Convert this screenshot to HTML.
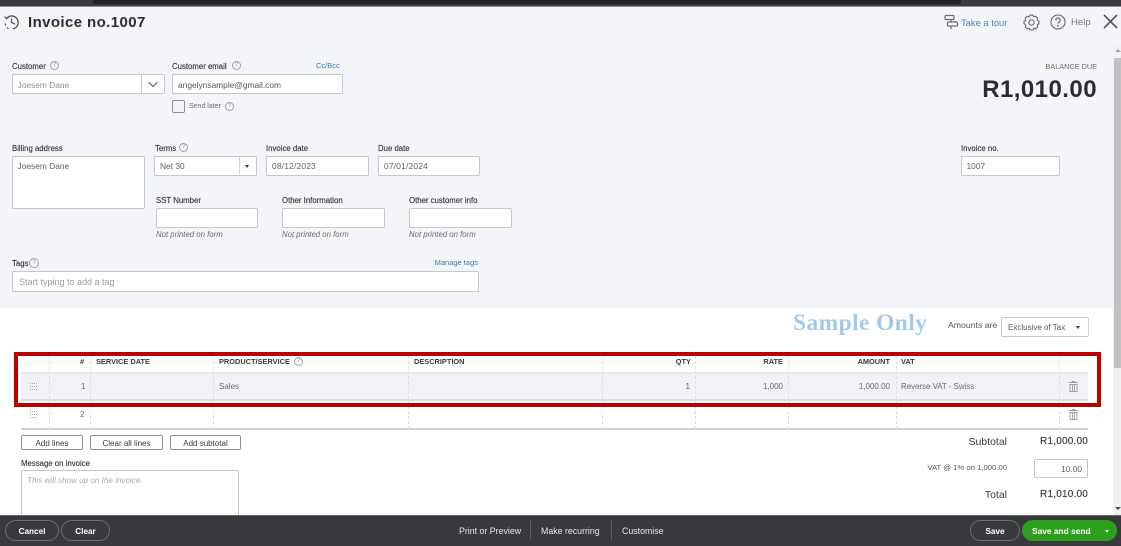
<!DOCTYPE html>
<html><head><meta charset="utf-8"><style>
html,body{margin:0;padding:0}
body{width:1121px;height:546px;position:relative;overflow:hidden;background:#f4f5f8;font-family:"Liberation Sans",sans-serif;color:#393a3d}
.a{position:absolute;white-space:nowrap}
.l{position:absolute;white-space:nowrap;font-size:7.8px;line-height:10px;color:#393a3d;margin-top:.6px;-webkit-text-stroke:.15px #393a3d}
.i{position:absolute;box-sizing:border-box;background:#fff;border:1px solid #c4c7cc;border-radius:2px;font-size:8.4px;color:#5f6066;padding-left:4.5px;white-space:nowrap}
.n{position:absolute;white-space:nowrap;font-size:7.8px;line-height:9px;font-style:italic;color:#6b6c72}
.q{position:absolute;box-sizing:border-box;width:9px;height:9px;border:1px solid #a0a3a8;border-radius:50%;font-size:6px;line-height:7px;text-align:center;color:#8d9096}
.h{position:absolute;top:357px;font-size:7.4px;line-height:10px;font-weight:700;color:#393a3d;white-space:nowrap}
.v{position:absolute;width:0;border-left:1px dashed #dcdee2}
.c{position:absolute;font-size:8px;line-height:10px;color:#6b6c72;white-space:nowrap}
.b{position:absolute;box-sizing:border-box;border:1px solid #8d9096;border-radius:2px;background:#fff;font-size:8px;color:#393a3d;text-align:center;height:15px;line-height:15px;top:435px}
.f{position:absolute;box-sizing:border-box;border:1px solid #6b6c72;border-radius:11px;height:21px;top:520px;line-height:22px;text-align:center;color:#fff;font-size:8.2px;font-weight:700}
.t{position:absolute;font-size:8.8px;line-height:10px;color:#e4e5e8;top:525.5px;white-space:nowrap}
</style></head><body>
<!-- top bar -->
<div class="a" style="left:0;top:0;width:1121px;height:6px;background:#3a3b3e"></div>
<div class="a" style="left:93px;top:0;width:868px;height:4px;background:#232427"></div>
<div class="a" style="left:0;top:6px;width:1121px;height:1px;background:#8f9094"></div>
<!-- history icon -->
<svg class="a" style="left:3px;top:13px" width="18" height="18" viewBox="0 0 18 18" fill="none" stroke="#55565b" stroke-width="1.3"><path d="M3.5 5.500A6.500 6.500 0 1 1 10 15.800"/><path d="M1.500 3.500l2 2.200 2.300-1.500"/><path d="M8.500 5.500v4l3.500 1.500"/><path d="M2.200 10.500l.6 2M4 14.500l1.500 1.200"/></svg>
<div class="a" style="left:28px;top:14px;font-size:15px;line-height:18px;font-weight:700;color:#2c2d30;letter-spacing:.4px">Invoice no.1007</div>
<!-- top right -->
<svg class="a" style="left:944px;top:14px" width="15" height="17" viewBox="0 0 15 17" fill="none" stroke="#6b6c72" stroke-width="1.2"><rect x="1" y="1.500" width="9" height="4" rx="1"/><rect x="3.500" y="8" width="10" height="4" rx="1"/><path d="M7 5.500V8M7 12v3"/></svg>
<div class="a" style="left:961px;top:17px;font-size:9.4px;line-height:11px;color:#4b86b8">Take a tour</div>
<svg class="a" style="left:1023px;top:14px" width="17" height="17" viewBox="0 0 24 24" fill="none" stroke="#6b6c72" stroke-width="1.6">
<circle cx="12" cy="12" r="3.800"/>
<path d="M9.200 3.600L10 1.500H14L14.800 3.600A8.850 8.850 0 0 1 15.960 4.090"/>
<path transform="rotate(45 12 12)" d="M9.200 3.600L10 1.500H14L14.800 3.600A8.850 8.850 0 0 1 15.960 4.090"/>
<path transform="rotate(90 12 12)" d="M9.200 3.600L10 1.500H14L14.800 3.600A8.850 8.850 0 0 1 15.960 4.090"/>
<path transform="rotate(135 12 12)" d="M9.200 3.600L10 1.500H14L14.800 3.600A8.850 8.850 0 0 1 15.960 4.090"/>
<path transform="rotate(180 12 12)" d="M9.200 3.600L10 1.500H14L14.800 3.600A8.850 8.850 0 0 1 15.960 4.090"/>
<path transform="rotate(225 12 12)" d="M9.200 3.600L10 1.500H14L14.800 3.600A8.850 8.850 0 0 1 15.960 4.090"/>
<path transform="rotate(270 12 12)" d="M9.200 3.600L10 1.500H14L14.800 3.600A8.850 8.850 0 0 1 15.960 4.090"/>
<path transform="rotate(315 12 12)" d="M9.200 3.600L10 1.500H14L14.800 3.600A8.850 8.850 0 0 1 15.960 4.090"/>
</svg>
<svg class="a" style="left:1050px;top:14px" width="16" height="16" viewBox="0 0 16 16" fill="none" stroke="#66676c" stroke-width="1.1"><circle cx="8" cy="8" r="7"/><path d="M5.800 6.200a2.200 2.200 0 1 1 3.400 1.800c-.8.500-1.200 1-1.200 1.800" stroke-width="1.2"/><circle cx="8" cy="11.800" r=".4" fill="#66676c"/></svg>
<div class="a" style="left:1071px;top:17px;font-size:9.6px;line-height:11px;color:#77787d">Help</div>
<svg class="a" style="left:1103px;top:14px" width="15" height="15" viewBox="0 0 15 15" fill="none" stroke="#55565b" stroke-width="1.6"><path d="M1 1l13 13M14 1L1 14"/></svg>
<!-- customer -->
<div class="l" style="left:12px;top:61px">Customer</div><div class="q" style="left:50px;top:61px">?</div>
<div class="i" style="left:12px;top:74px;width:153px;height:20px;line-height:20px;color:#8d9096">Joesem Dane</div>
<div class="a" style="left:141px;top:75px;width:1px;height:18px;background:#c4c7cc"></div>
<svg class="a" style="left:147px;top:81px" width="12" height="7" viewBox="0 0 12 7" fill="none" stroke="#55565b" stroke-width="1"><path d="M1.500 1l4.500 4.500L10.500 1"/></svg>
<div class="l" style="left:172px;top:61px">Customer email</div><div class="q" style="left:232px;top:61px">?</div>
<div class="a" style="left:316px;top:61px;font-size:7.5px;line-height:10px;color:#3b79b5">Cc/Bcc</div>
<div class="i" style="left:172px;top:74px;width:171px;height:20px;line-height:20px;color:#55565b;padding-left:5px">angelynsample@gmail.com</div>
<div class="a" style="left:172px;top:100px;width:13px;height:13px;box-sizing:border-box;background:#f4f5f8;border:1px solid #8d9096;border-radius:2px"></div>
<div class="a" style="left:189px;top:102px;font-size:7px;line-height:10px;color:#6b6c72">Send later</div><div class="q" style="left:225px;top:102px">?</div>
<!-- balance -->
<div class="a" style="right:24px;top:62px;font-size:7.3px;line-height:10px;color:#6b6c72">BALANCE DUE</div>
<div class="a" style="right:24px;top:77px;font-size:24px;line-height:26px;font-weight:700;color:#2c2d30;letter-spacing:.45px">R1,010.00</div>
<!-- row 2 -->
<div class="l" style="left:12px;top:143px">Billing address</div>
<div class="i" style="left:12px;top:156px;width:133px;height:53px;line-height:18px">Joesem Dane</div>
<div class="l" style="left:155px;top:143px">Terms</div><div class="q" style="left:179px;top:143px">?</div>
<div class="i" style="left:154px;top:156px;width:103px;height:20px;line-height:19px;padding-left:5px">Net 30</div>
<div class="a" style="left:239px;top:157px;width:1px;height:18px;background:#d4d7dc"></div>
<div class="a" style="left:245px;top:165px;border-left:2.500px solid transparent;border-right:2.500px solid transparent;border-top:3px solid #393a3d"></div>
<div class="l" style="left:266px;top:143px">Invoice date</div>
<div class="i" style="left:266px;top:156px;width:103px;height:20px;line-height:19px;padding-left:5px;letter-spacing:.2px">08/12/2023</div>
<div class="l" style="left:378px;top:143px">Due date</div>
<div class="i" style="left:378px;top:156px;width:102px;height:20px;line-height:19px;padding-left:5px;letter-spacing:.2px">07/01/2024</div>
<div class="l" style="left:961px;top:143px">Invoice no.</div>
<div class="i" style="left:961px;top:156px;width:99px;height:20px;line-height:19px">1007</div>
<!-- row 3 -->
<div class="l" style="left:156px;top:195px">SST Number</div>
<div class="i" style="left:156px;top:208px;width:102px;height:20px"></div>
<div class="n" style="left:156px;top:230px">Not printed on form</div>
<div class="l" style="left:282px;top:195px">Other Information</div>
<div class="i" style="left:282px;top:208px;width:103px;height:20px"></div>
<div class="n" style="left:282px;top:230px">Not printed on form</div>
<div class="l" style="left:409px;top:195px">Other customer info</div>
<div class="i" style="left:409px;top:208px;width:103px;height:20px"></div>
<div class="n" style="left:409px;top:230px">Not printed on form</div>
<!-- tags -->
<div class="l" style="left:12px;top:258px">Tags</div><div class="q" style="left:29px;top:258px;width:10px;height:10px;line-height:8px">?</div>
<div class="a" style="right:643px;top:258px;font-size:7.5px;line-height:10px;color:#3b79b5">Manage tags</div>
<div class="i" style="left:12px;top:271px;width:467px;height:21px;line-height:20px;padding-left:6px;font-size:9px;color:#9a9ca2">Start typing to add a tag</div>
<!-- white section -->
<div class="a" style="left:0;top:308px;width:1113px;height:208px;background:#fff"></div>
<div class="a" style="left:793px;top:311px;font-family:'Liberation Serif',serif;font-size:23.5px;line-height:24px;font-weight:700;color:#a3c9ea;letter-spacing:.4px">Sample Only</div>
<div class="a" style="left:948px;top:320px;font-size:8.7px;line-height:11px;color:#55565b">Amounts are</div>
<div class="i" style="left:1001px;top:317px;width:88px;height:20px;line-height:19px;padding-left:6px;border-right-color:#d4d7dc;color:#55565b;font-size:8px">Exclusive of Tax</div>
<div class="a" style="left:1076px;top:326px;border-left:2.500px solid transparent;border-right:2.500px solid transparent;border-top:3px solid #393a3d"></div>
<!-- table -->
<div class="a" style="left:21px;top:372px;width:1067px;height:29px;background:#f1f2f6;box-sizing:border-box;border-top:2px solid #e6e7eb;border-bottom:2px solid #dcdde1"></div>
<div class="a" style="left:21px;top:428px;width:1067px;height:2px;background:#cfd1d5"></div>
<div class="v" style="left:49px;top:351px;height:78px"></div>
<div class="v" style="left:90px;top:351px;height:78px"></div>
<div class="v" style="left:213px;top:351px;height:78px"></div>
<div class="v" style="left:408px;top:351px;height:78px"></div>
<div class="v" style="left:602px;top:351px;height:78px"></div>
<div class="v" style="left:695px;top:351px;height:78px"></div>
<div class="v" style="left:788px;top:351px;height:78px"></div>
<div class="v" style="left:896px;top:351px;height:78px"></div>
<div class="v" style="left:1059px;top:351px;height:78px"></div>
<div class="h" style="left:80px">#</div>
<div class="h" style="left:96px">SERVICE DATE</div>
<div class="h" style="left:219px">PRODUCT/SERVICE</div><div class="q" style="left:294px;top:357px">?</div>
<div class="h" style="left:414px">DESCRIPTION</div>
<div class="h" style="right:430px">QTY</div>
<div class="h" style="right:338px">RATE</div>
<div class="h" style="right:231px">AMOUNT</div>
<div class="h" style="left:901px">VAT</div>
<div class="c" style="left:81px;top:381.5px">1</div>
<div class="c" style="left:219px;top:381.5px">Sales</div>
<div class="c" style="right:431px;top:381.5px">1</div>
<div class="c" style="right:338px;top:381.5px">1,000</div>
<div class="c" style="right:231px;top:381.5px">1,000.00</div>
<div class="c" style="left:901px;top:381.5px;font-size:7.9px">Reverse VAT - Swiss</div>
<div class="c" style="left:80px;top:410px">2</div>
<svg class="a" style="left:30px;top:383px" width="7" height="7"><path d="M0 .5h7M0 3.500h7M0 6.500h7" stroke="#a9abb0" stroke-dasharray="1 1"/></svg>
<svg class="a" style="left:30px;top:411px" width="7" height="7"><path d="M0 .5h7M0 3.500h7M0 6.500h7" stroke="#a9abb0" stroke-dasharray="1 1"/></svg>
<svg class="a" style="left:1069px;top:381px" width="9" height="11" viewBox="0 0 9 11" fill="none" stroke="#a0a3a8"><path d="M0 1.500h9M3 .5h3M1 3.500h7v7H1zM3.500 4v6M5.500 4v6"/></svg>
<svg class="a" style="left:1069px;top:409px" width="9" height="11" viewBox="0 0 9 11" fill="none" stroke="#a0a3a8"><path d="M0 1.500h9M3 .5h3M1 3.500h7v7H1zM3.500 4v6M5.500 4v6"/></svg>
<!-- red box -->
<div class="a" style="left:14px;top:352px;width:1087px;height:55px;box-sizing:border-box;border:4px solid #bb0000"></div>
<!-- buttons -->
<div class="b" style="left:21px;width:62px">Add lines</div>
<div class="b" style="left:90px;width:73px">Clear all lines</div>
<div class="b" style="left:170px;width:71px">Add subtotal</div>
<div class="l" style="left:21px;top:458px">Message on invoice</div>
<div class="i" style="left:21px;top:470px;width:218px;height:60px;line-height:19px;font-size:8.1px;padding-left:5px;font-style:italic;color:#a9abb0">This will show up on the invoice.</div>
<!-- totals -->
<div class="a" style="right:114px;top:435.5px;font-size:10.5px;line-height:12px;color:#393a3d">Subtotal</div>
<div class="a" style="right:33px;top:436px;font-size:10px;line-height:12px;color:#393a3d;letter-spacing:.2px;-webkit-text-stroke:.15px #393a3d">R1,000.00</div>
<div class="a" style="right:114px;top:463px;font-size:7.7px;line-height:10px;color:#55565b">VAT @ 1% on 1,000.00</div>
<div class="i" style="left:1034px;top:459px;width:54px;height:19px;line-height:18px;text-align:right;padding-right:5px;padding-left:0">10.00</div>
<div class="a" style="right:114px;top:489px;font-size:10.5px;line-height:12px;color:#393a3d">Total</div>
<div class="a" style="right:33px;top:489px;font-size:10px;line-height:12px;color:#393a3d;letter-spacing:.2px;-webkit-text-stroke:.15px #393a3d">R1,010.00</div>
<!-- scrollbar -->
<div class="a" style="left:1113px;top:45px;width:8px;height:471px;background:#f1f1f1"></div>
<div class="a" style="left:1114px;top:58px;width:7px;height:310px;background:#c1c1c1"></div>
<div class="a" style="left:1115px;top:49px;border-left:3px solid transparent;border-right:3px solid transparent;border-bottom:3px solid #a3a3a3"></div>
<div class="a" style="left:1115px;top:507px;border-left:3px solid transparent;border-right:3px solid transparent;border-top:3px solid #505050"></div>
<!-- footer -->
<div class="a" style="left:0;top:515px;width:1121px;height:31px;background:#393a3d;border-top:1px solid #66676b;box-sizing:border-box"></div>
<div class="f" style="left:5px;width:54px">Cancel</div>
<div class="f" style="left:61px;width:49px">Clear</div>
<div class="t" style="left:459px">Print or Preview</div>
<div class="a" style="left:530px;top:520px;width:1px;height:20px;background:#5d5e62"></div>
<div class="t" style="left:541px">Make recurring</div>
<div class="a" style="left:611px;top:520px;width:1px;height:20px;background:#5d5e62"></div>
<div class="t" style="left:622px">Customise</div>
<div class="f" style="left:970px;width:50px">Save</div>
<div class="f" style="left:1022px;width:95px;background:#2ca01c;border:0;line-height:23px;text-align:left;padding-left:10px;font-size:8.4px">Save and send</div>
<div class="a" style="left:1105px;top:530px;border-left:2.500px solid transparent;border-right:2.500px solid transparent;border-top:3px solid #fff"></div>
</body></html>
